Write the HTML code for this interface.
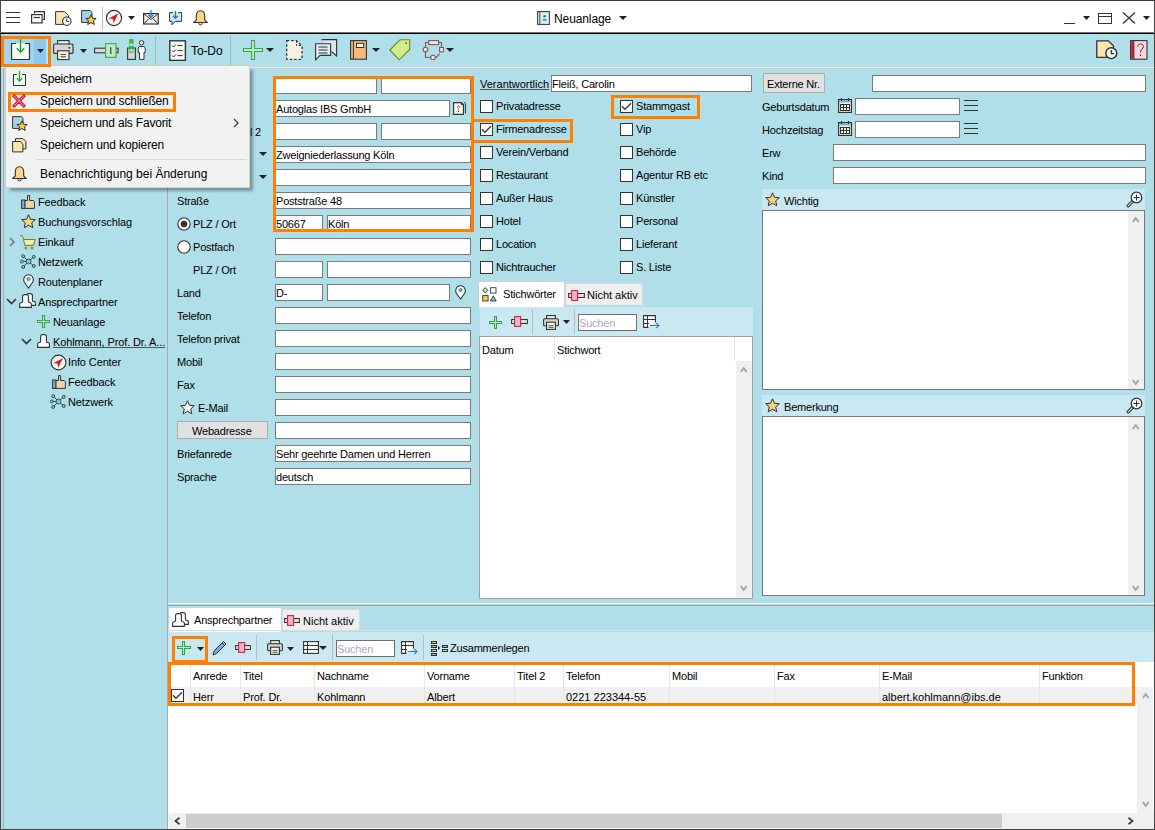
<!DOCTYPE html><html><head><meta charset="utf-8"><style>
html,body{margin:0;padding:0;width:1155px;height:830px;overflow:hidden;background:#b0dee9}
body>div,body>svg{position:absolute}
div{position:absolute}
u{text-decoration-color:#505050;text-underline-offset:1px}
.t{font-family:"Liberation Sans",sans-serif;line-height:13px;white-space:nowrap;color:#000}
</style></head><body>
<div style="left:0px;top:0px;width:1155px;height:830px;background:#b0dee9;"></div>
<div style="left:0px;top:0px;width:1155px;height:33px;background:#fff;"></div>
<div style="left:0px;top:0px;width:1155px;height:1px;background:#3a3a3a;"></div>
<div style="left:0px;top:0px;width:1px;height:830px;background:#464444;"></div>
<div style="left:1154px;top:0px;width:1px;height:830px;background:#464444;"></div>
<div style="left:0px;top:829px;width:1155px;height:1px;background:#464444;"></div>
<div style="left:0px;top:32px;width:1155px;height:1px;background:#707070;"></div>
<div style="left:0px;top:33px;width:1155px;height:1px;background:#000;"></div>
<div style="left:1px;top:67px;width:1153px;height:1px;background:#eeeaea;"></div>
<div style="left:1px;top:68px;width:1153px;height:1px;background:#c4cccf;"></div>
<div style="left:3px;top:68px;width:1px;height:761px;background:#a8a8b0;"></div>
<div style="left:167px;top:68px;width:1px;height:761px;background:#a8a8b0;"></div>
<div style="left:168px;top:603px;width:986px;height:1px;background:#fff;"></div>
<div style="left:168px;top:605px;width:986px;height:1px;background:#a0a0a0;"></div>
<div class="t" style="left:554px;top:13px;font-size:12px;letter-spacing:-0.1px;">Neuanlage</div>
<svg style="position:absolute;left:619px;top:16px" width="8" height="4" viewBox="0 0 8 4"><path d="M0 0 H8 L4.0 4 Z" fill="#222"/></svg>
<div style="left:1064px;top:23px;width:11px;height:1px;background:#333;"></div>
<svg style="position:absolute;left:1083px;top:16px" width="7" height="4" viewBox="0 0 7 4"><path d="M0 0 H7 L3.5 4 Z" fill="#222"/></svg>
<div style="left:1098px;top:13px;width:14px;height:11px;border:1px solid #333;box-sizing:border-box;"></div>
<div style="left:1099px;top:16px;width:12px;height:1px;background:#333;"></div>
<svg style="position:absolute;left:1122px;top:12px" width="14" height="12" viewBox="0 0 14 12"><path d="M1 0.5 L13 11.5 M13 0.5 L1 11.5" stroke="#333" stroke-width="1.3"/></svg>
<svg style="position:absolute;left:1143px;top:16px" width="7" height="4" viewBox="0 0 7 4"><path d="M0 0 H7 L3.5 4 Z" fill="#222"/></svg>
<div style="left:4px;top:39px;width:44px;height:25px;background:#a6d4ec;"></div>
<div style="left:34px;top:39px;width:12px;height:25px;background:#8cc8ee;"></div>
<div style="left:46px;top:39px;width:2px;height:25px;background:#b8e4f8;"></div>
<div class="t" style="left:191px;top:45px;font-size:12px;letter-spacing:-0.1px;">To-Do</div>
<div style="left:102px;top:7px;width:1px;height:23px;background:#bbb;"></div>
<div style="left:155px;top:36px;width:1px;height:30px;background:#a9b6ba;"></div>
<div style="left:230px;top:36px;width:1px;height:30px;background:#a9b6ba;"></div>
<div class="t" style="left:38px;top:196px;font-size:11px;letter-spacing:-0.12px;">Feedback</div>
<div class="t" style="left:38px;top:216px;font-size:11px;letter-spacing:-0.12px;">Buchungsvorschlag</div>
<div class="t" style="left:38px;top:236px;font-size:11px;letter-spacing:-0.12px;">Einkauf</div>
<div class="t" style="left:38px;top:256px;font-size:11px;letter-spacing:-0.12px;">Netzwerk</div>
<div class="t" style="left:38px;top:276px;font-size:11px;letter-spacing:-0.12px;">Routenplaner</div>
<div class="t" style="left:38px;top:296px;font-size:11px;letter-spacing:-0.12px;">Ansprechpartner</div>
<div class="t" style="left:53px;top:316px;font-size:11px;letter-spacing:-0.12px;">Neuanlage</div>
<div class="t" style="left:53px;top:336px;font-size:11px;letter-spacing:-0.12px;"><u>Kohlmann, Prof. Dr. A...</u></div>
<div class="t" style="left:68px;top:356px;font-size:11px;letter-spacing:-0.12px;">Info Center</div>
<div class="t" style="left:68px;top:376px;font-size:11px;letter-spacing:-0.12px;">Feedback</div>
<div class="t" style="left:68px;top:396px;font-size:11px;letter-spacing:-0.12px;">Netzwerk</div>
<div style="left:275px;top:77px;width:102px;height:17px;background:#fff;border:1px solid #7a7a7a;box-sizing:border-box;"></div>
<div style="left:381px;top:77px;width:90px;height:17px;background:#fff;border:1px solid #7a7a7a;box-sizing:border-box;"></div>
<div style="left:275px;top:100px;width:175px;height:17px;background:#fff;border:1px solid #7a7a7a;box-sizing:border-box;"></div>
<div class="t" style="left:276px;top:103px;font-size:11px;letter-spacing:-0.2px;">Autoglas IBS GmbH</div>
<div style="left:275px;top:123px;width:102px;height:17px;background:#fff;border:1px solid #7a7a7a;box-sizing:border-box;"></div>
<div style="left:381px;top:123px;width:90px;height:17px;background:#fff;border:1px solid #7a7a7a;box-sizing:border-box;"></div>
<div style="left:275px;top:146px;width:196px;height:17px;background:#fff;border:1px solid #7a7a7a;box-sizing:border-box;"></div>
<div class="t" style="left:276px;top:149px;font-size:11px;letter-spacing:-0.2px;">Zweigniederlassung Köln</div>
<div style="left:275px;top:169px;width:196px;height:17px;background:#fff;border:1px solid #7a7a7a;box-sizing:border-box;"></div>
<div style="left:275px;top:192px;width:196px;height:17px;background:#fff;border:1px solid #7a7a7a;box-sizing:border-box;"></div>
<div class="t" style="left:276px;top:195px;font-size:11px;letter-spacing:-0.2px;">Poststraße 48</div>
<div style="left:275px;top:215px;width:48px;height:17px;background:#fff;border:1px solid #7a7a7a;box-sizing:border-box;"></div>
<div class="t" style="left:276px;top:218px;font-size:11px;letter-spacing:-0.2px;">50667</div>
<div style="left:327px;top:215px;width:144px;height:17px;background:#fff;border:1px solid #7a7a7a;box-sizing:border-box;"></div>
<div class="t" style="left:328px;top:218px;font-size:11px;letter-spacing:-0.2px;">Köln</div>
<div style="left:275px;top:238px;width:196px;height:17px;background:#fff;border:1px solid #7a7a7a;box-sizing:border-box;"></div>
<div style="left:275px;top:261px;width:48px;height:17px;background:#fff;border:1px solid #7a7a7a;box-sizing:border-box;"></div>
<div style="left:327px;top:261px;width:144px;height:17px;background:#fff;border:1px solid #7a7a7a;box-sizing:border-box;"></div>
<div style="left:275px;top:284px;width:48px;height:17px;background:#fff;border:1px solid #7a7a7a;box-sizing:border-box;"></div>
<div class="t" style="left:276px;top:287px;font-size:11px;letter-spacing:-0.2px;">D-</div>
<div style="left:327px;top:284px;width:123px;height:17px;background:#fff;border:1px solid #7a7a7a;box-sizing:border-box;"></div>
<div style="left:275px;top:307px;width:196px;height:17px;background:#fff;border:1px solid #7a7a7a;box-sizing:border-box;"></div>
<div style="left:275px;top:330px;width:196px;height:17px;background:#fff;border:1px solid #7a7a7a;box-sizing:border-box;"></div>
<div style="left:275px;top:353px;width:196px;height:17px;background:#fff;border:1px solid #7a7a7a;box-sizing:border-box;"></div>
<div style="left:275px;top:376px;width:196px;height:17px;background:#fff;border:1px solid #7a7a7a;box-sizing:border-box;"></div>
<div style="left:275px;top:399px;width:196px;height:17px;background:#fff;border:1px solid #7a7a7a;box-sizing:border-box;"></div>
<div style="left:275px;top:422px;width:196px;height:17px;background:#fff;border:1px solid #7a7a7a;box-sizing:border-box;"></div>
<div style="left:275px;top:445px;width:196px;height:17px;background:#fff;border:1px solid #7a7a7a;box-sizing:border-box;"></div>
<div class="t" style="left:276px;top:448px;font-size:11px;letter-spacing:-0.2px;">Sehr geehrte Damen und Herren</div>
<div style="left:275px;top:468px;width:196px;height:17px;background:#fff;border:1px solid #7a7a7a;box-sizing:border-box;"></div>
<div class="t" style="left:276px;top:471px;font-size:11px;letter-spacing:-0.2px;">deutsch</div>
<div class="t" style="left:177px;top:195px;font-size:11px;letter-spacing:-0.2px;">Straße</div>
<div class="t" style="left:193px;top:218px;font-size:11px;letter-spacing:-0.2px;">PLZ / Ort</div>
<div class="t" style="left:193px;top:241px;font-size:11px;letter-spacing:-0.2px;">Postfach</div>
<div class="t" style="left:193px;top:264px;font-size:11px;letter-spacing:-0.2px;">PLZ / Ort</div>
<div class="t" style="left:177px;top:287px;font-size:11px;letter-spacing:-0.2px;">Land</div>
<div class="t" style="left:177px;top:310px;font-size:11px;letter-spacing:-0.2px;">Telefon</div>
<div class="t" style="left:177px;top:333px;font-size:11px;letter-spacing:-0.2px;">Telefon privat</div>
<div class="t" style="left:177px;top:356px;font-size:11px;letter-spacing:-0.2px;">Mobil</div>
<div class="t" style="left:177px;top:379px;font-size:11px;letter-spacing:-0.2px;">Fax</div>
<div class="t" style="left:198px;top:402px;font-size:11px;letter-spacing:-0.2px;">E-Mail</div>
<div class="t" style="left:177px;top:448px;font-size:11px;letter-spacing:-0.2px;">Briefanrede</div>
<div class="t" style="left:177px;top:471px;font-size:11px;letter-spacing:-0.2px;">Sprache</div>
<div class="t" style="left:250px;top:126px;font-size:11px;letter-spacing:-0.2px;">l 2</div>
<svg style="position:absolute;left:259px;top:152px" width="8" height="4" viewBox="0 0 8 4"><path d="M0 0 H8 L4.0 4 Z" fill="#222"/></svg>
<svg style="position:absolute;left:259px;top:175px" width="8" height="4" viewBox="0 0 8 4"><path d="M0 0 H8 L4.0 4 Z" fill="#222"/></svg>
<svg style="position:absolute;left:177px;top:217px" width="14" height="14" viewBox="0 0 14 14"><circle cx="7" cy="7" r="6.2" fill="#fff" stroke="#333" stroke-width="1.1"/><circle cx="7" cy="7" r="3.3" fill="#333"/></svg>
<svg style="position:absolute;left:177px;top:240px" width="14" height="14" viewBox="0 0 14 14"><circle cx="7" cy="7" r="6.2" fill="#fff" stroke="#333" stroke-width="1.1"/></svg>
<div style="left:177px;top:421px;width:91px;height:18px;background:#e1e1e1;border:1px solid #adadad;box-sizing:border-box;"></div>
<div class="t" style="left:192px;top:425px;font-size:11px;letter-spacing:-0.2px;">Webadresse</div>
<div style="left:273px;top:76px;width:201px;height:156px;border:3px solid #ff7f00;box-sizing:border-box;"></div>
<div class="t" style="left:480px;top:78px;font-size:11px;letter-spacing:0px;"><u>Verantwortlich</u></div>
<div style="left:551px;top:75px;width:201px;height:17px;background:#fff;border:1px solid #7a7a7a;box-sizing:border-box;"></div>
<div class="t" style="left:552px;top:78px;font-size:11px;letter-spacing:-0.2px;">Fleiß, Carolin</div>
<div style="left:480px;top:100px;width:13px;height:13px;background:#fff;border:1px solid #333;box-sizing:border-box;"></div>
<div class="t" style="left:496px;top:100px;font-size:11px;letter-spacing:-0.2px;">Privatadresse</div>
<div style="left:620px;top:100px;width:13px;height:13px;background:#fff;border:1px solid #333;box-sizing:border-box;"></div>
<svg style="position:absolute;left:620px;top:100px" width="13" height="13" viewBox="0 0 13 13"><path d="M2 6.3 L5 9.3 L11 3.2" fill="none" stroke="#3a3a3a" stroke-width="1.4"/></svg>
<div class="t" style="left:636px;top:100px;font-size:11px;letter-spacing:-0.2px;">Stammgast</div>
<div style="left:480px;top:123px;width:13px;height:13px;background:#fff;border:1px solid #333;box-sizing:border-box;"></div>
<svg style="position:absolute;left:480px;top:123px" width="13" height="13" viewBox="0 0 13 13"><path d="M2 6.3 L5 9.3 L11 3.2" fill="none" stroke="#3a3a3a" stroke-width="1.4"/></svg>
<div class="t" style="left:496px;top:123px;font-size:11px;letter-spacing:-0.2px;">Firmenadresse</div>
<div style="left:620px;top:123px;width:13px;height:13px;background:#fff;border:1px solid #333;box-sizing:border-box;"></div>
<div class="t" style="left:636px;top:123px;font-size:11px;letter-spacing:-0.2px;">Vip</div>
<div style="left:480px;top:146px;width:13px;height:13px;background:#fff;border:1px solid #333;box-sizing:border-box;"></div>
<div class="t" style="left:496px;top:146px;font-size:11px;letter-spacing:-0.2px;">Verein/Verband</div>
<div style="left:620px;top:146px;width:13px;height:13px;background:#fff;border:1px solid #333;box-sizing:border-box;"></div>
<div class="t" style="left:636px;top:146px;font-size:11px;letter-spacing:-0.2px;">Behörde</div>
<div style="left:480px;top:169px;width:13px;height:13px;background:#fff;border:1px solid #333;box-sizing:border-box;"></div>
<div class="t" style="left:496px;top:169px;font-size:11px;letter-spacing:-0.2px;">Restaurant</div>
<div style="left:620px;top:169px;width:13px;height:13px;background:#fff;border:1px solid #333;box-sizing:border-box;"></div>
<div class="t" style="left:636px;top:169px;font-size:11px;letter-spacing:-0.2px;">Agentur RB etc</div>
<div style="left:480px;top:192px;width:13px;height:13px;background:#fff;border:1px solid #333;box-sizing:border-box;"></div>
<div class="t" style="left:496px;top:192px;font-size:11px;letter-spacing:-0.2px;">Außer Haus</div>
<div style="left:620px;top:192px;width:13px;height:13px;background:#fff;border:1px solid #333;box-sizing:border-box;"></div>
<div class="t" style="left:636px;top:192px;font-size:11px;letter-spacing:-0.2px;">Künstler</div>
<div style="left:480px;top:215px;width:13px;height:13px;background:#fff;border:1px solid #333;box-sizing:border-box;"></div>
<div class="t" style="left:496px;top:215px;font-size:11px;letter-spacing:-0.2px;">Hotel</div>
<div style="left:620px;top:215px;width:13px;height:13px;background:#fff;border:1px solid #333;box-sizing:border-box;"></div>
<div class="t" style="left:636px;top:215px;font-size:11px;letter-spacing:-0.2px;">Personal</div>
<div style="left:480px;top:238px;width:13px;height:13px;background:#fff;border:1px solid #333;box-sizing:border-box;"></div>
<div class="t" style="left:496px;top:238px;font-size:11px;letter-spacing:-0.2px;">Location</div>
<div style="left:620px;top:238px;width:13px;height:13px;background:#fff;border:1px solid #333;box-sizing:border-box;"></div>
<div class="t" style="left:636px;top:238px;font-size:11px;letter-spacing:-0.2px;">Lieferant</div>
<div style="left:480px;top:261px;width:13px;height:13px;background:#fff;border:1px solid #333;box-sizing:border-box;"></div>
<div class="t" style="left:496px;top:261px;font-size:11px;letter-spacing:-0.2px;">Nichtraucher</div>
<div style="left:620px;top:261px;width:13px;height:13px;background:#fff;border:1px solid #333;box-sizing:border-box;"></div>
<div class="t" style="left:636px;top:261px;font-size:11px;letter-spacing:-0.2px;">S. Liste</div>
<div style="left:611px;top:95px;width:89px;height:24px;border:3px solid #ff7f00;box-sizing:border-box;"></div>
<div style="left:471px;top:119px;width:102px;height:24px;border:3px solid #ff7f00;box-sizing:border-box;"></div>
<div style="left:478px;top:281px;width:87px;height:26px;background:#fff;border:1px solid #d0d0d0;border-bottom:0;box-sizing:border-box;"></div>
<div style="left:565px;top:283px;width:78px;height:22px;background:#efefef;border:1px solid #dadada;border-bottom:0;box-sizing:border-box;"></div>
<div class="t" style="left:503px;top:288px;font-size:11px;letter-spacing:-0.2px;">Stichwörter</div>
<div class="t" style="left:587px;top:289px;font-size:11px;letter-spacing:0px;">Nicht aktiv</div>
<div style="left:480px;top:307px;width:273px;height:29px;background:#c9e8f1;"></div>
<div style="left:479px;top:336px;width:274px;height:263px;background:#fff;border:1px solid #a0a0a0;box-sizing:border-box;"></div>
<div style="left:736px;top:361px;width:16px;height:237px;background:#f0f0f0;"></div>
<div class="t" style="left:482px;top:344px;font-size:11px;letter-spacing:-0.2px;">Datum</div>
<div class="t" style="left:557px;top:344px;font-size:11px;letter-spacing:-0.2px;">Stichwort</div>
<div style="left:554px;top:337px;width:1px;height:24px;background:#e5e5e5;"></div>
<div style="left:734px;top:337px;width:1px;height:24px;background:#e5e5e5;"></div>
<div style="left:578px;top:314px;width:59px;height:17px;background:#fff;border:1px solid #7a7a7a;box-sizing:border-box;border-color:#6e6e6e;"></div>
<div class="t" style="left:579px;top:317px;font-size:11px;letter-spacing:-0.2px;"><span style="color:#a8a8c8">Suchen</span></div>
<div style="left:532px;top:309px;width:1px;height:25px;background:#b4bec2;"></div>
<div style="left:574px;top:309px;width:1px;height:25px;background:#b4bec2;"></div>
<div style="left:763px;top:73px;width:62px;height:20px;background:#e1e1e1;border:1px solid #adadad;box-sizing:border-box;"></div>
<div class="t" style="left:767px;top:78px;font-size:11px;letter-spacing:-0.2px;">Externe Nr.</div>
<div style="left:872px;top:75px;width:274px;height:17px;background:#fff;border:1px solid #7a7a7a;box-sizing:border-box;"></div>
<div class="t" style="left:762px;top:101px;font-size:11px;letter-spacing:-0.2px;">Geburtsdatum</div>
<div style="left:855px;top:98px;width:105px;height:17px;background:#fff;border:1px solid #7a7a7a;box-sizing:border-box;"></div>
<div class="t" style="left:762px;top:124px;font-size:11px;letter-spacing:-0.2px;">Hochzeitstag</div>
<div style="left:855px;top:121px;width:105px;height:17px;background:#fff;border:1px solid #7a7a7a;box-sizing:border-box;"></div>
<div class="t" style="left:762px;top:147px;font-size:11px;letter-spacing:-0.2px;">Erw</div>
<div style="left:833px;top:144px;width:313px;height:17px;background:#fff;border:1px solid #7a7a7a;box-sizing:border-box;"></div>
<div class="t" style="left:762px;top:170px;font-size:11px;letter-spacing:-0.2px;">Kind</div>
<div style="left:833px;top:167px;width:313px;height:17px;background:#fff;border:1px solid #7a7a7a;box-sizing:border-box;"></div>
<div style="left:762px;top:189px;width:383px;height:21px;background:#c9e8f1;"></div>
<div class="t" style="left:784px;top:195px;font-size:11px;letter-spacing:-0.2px;">Wichtig</div>
<div style="left:762px;top:210px;width:383px;height:180px;background:#fff;border:1px solid #7a7a7a;box-sizing:border-box;"></div>
<div style="left:1128px;top:211px;width:16px;height:178px;background:#f0f0f0;"></div>
<div style="left:762px;top:395px;width:383px;height:21px;background:#c9e8f1;"></div>
<div class="t" style="left:784px;top:401px;font-size:11px;letter-spacing:-0.2px;">Bemerkung</div>
<div style="left:762px;top:416px;width:383px;height:180px;background:#fff;border:1px solid #7a7a7a;box-sizing:border-box;"></div>
<div style="left:1128px;top:417px;width:16px;height:178px;background:#f0f0f0;"></div>
<div style="left:169px;top:608px;width:112px;height:24px;background:#fff;"></div>
<div style="left:282px;top:609px;width:78px;height:22px;background:#efefef;border:1px solid #dadada;border-bottom:0;box-sizing:border-box;"></div>
<div class="t" style="left:194px;top:614px;font-size:11px;letter-spacing:-0.2px;">Ansprechpartner</div>
<div class="t" style="left:303px;top:615px;font-size:11px;letter-spacing:0px;">Nicht aktiv</div>
<div style="left:168px;top:630px;width:986px;height:1px;background:#d6dde0;"></div>
<div style="left:168px;top:632px;width:986px;height:30px;background:#c9e8f1;"></div>
<div style="left:168px;top:662px;width:986px;height:167px;background:#fff;"></div>
<div style="left:336px;top:640px;width:59px;height:17px;background:#fff;border:1px solid #7a7a7a;box-sizing:border-box;border-color:#6e6e6e;"></div>
<div class="t" style="left:337px;top:643px;font-size:11px;letter-spacing:-0.2px;"><span style="color:#a8a8c8">Suchen</span></div>
<div class="t" style="left:450px;top:642px;font-size:11px;letter-spacing:-0.2px;">Zusammenlegen</div>
<div style="left:256px;top:635px;width:1px;height:25px;background:#b4bec2;"></div>
<div style="left:332px;top:635px;width:1px;height:25px;background:#b4bec2;"></div>
<div style="left:423px;top:635px;width:1px;height:25px;background:#b4bec2;"></div>
<div style="left:172px;top:636px;width:36px;height:27px;border:3px solid #ff7f00;box-sizing:border-box;"></div>
<div class="t" style="left:193px;top:670px;font-size:11px;letter-spacing:-0.2px;">Anrede</div>
<div class="t" style="left:243px;top:670px;font-size:11px;letter-spacing:-0.2px;">Titel</div>
<div class="t" style="left:317px;top:670px;font-size:11px;letter-spacing:-0.2px;">Nachname</div>
<div class="t" style="left:427px;top:670px;font-size:11px;letter-spacing:-0.2px;">Vorname</div>
<div class="t" style="left:517px;top:670px;font-size:11px;letter-spacing:-0.2px;">Titel 2</div>
<div class="t" style="left:566px;top:670px;font-size:11px;letter-spacing:-0.2px;">Telefon</div>
<div class="t" style="left:672px;top:670px;font-size:11px;letter-spacing:-0.2px;">Mobil</div>
<div class="t" style="left:777px;top:670px;font-size:11px;letter-spacing:-0.2px;">Fax</div>
<div class="t" style="left:882px;top:670px;font-size:11px;letter-spacing:-0.2px;">E-Mail</div>
<div class="t" style="left:1042px;top:670px;font-size:11px;letter-spacing:-0.2px;">Funktion</div>
<div style="left:169px;top:687px;width:968px;height:17px;background:#f0f0f0;"></div>
<div style="left:190px;top:664px;width:1px;height:40px;background:#e5e5e5;"></div>
<div style="left:240px;top:664px;width:1px;height:40px;background:#e5e5e5;"></div>
<div style="left:314px;top:664px;width:1px;height:40px;background:#e5e5e5;"></div>
<div style="left:424px;top:664px;width:1px;height:40px;background:#e5e5e5;"></div>
<div style="left:514px;top:664px;width:1px;height:40px;background:#e5e5e5;"></div>
<div style="left:563px;top:664px;width:1px;height:40px;background:#e5e5e5;"></div>
<div style="left:669px;top:664px;width:1px;height:40px;background:#e5e5e5;"></div>
<div style="left:774px;top:664px;width:1px;height:40px;background:#e5e5e5;"></div>
<div style="left:879px;top:664px;width:1px;height:40px;background:#e5e5e5;"></div>
<div style="left:1039px;top:664px;width:1px;height:40px;background:#e5e5e5;"></div>
<div class="t" style="left:193px;top:691px;font-size:11px;letter-spacing:-0.15px;">Herr</div>
<div class="t" style="left:243px;top:691px;font-size:11px;letter-spacing:-0.15px;">Prof. Dr.</div>
<div class="t" style="left:317px;top:691px;font-size:11px;letter-spacing:-0.15px;">Kohlmann</div>
<div class="t" style="left:427px;top:691px;font-size:11px;letter-spacing:-0.15px;">Albert</div>
<div class="t" style="left:566px;top:691px;font-size:11px;letter-spacing:0px;">0221 223344-55</div>
<div class="t" style="left:882px;top:691px;font-size:11px;letter-spacing:0px;">albert.kohlmann@ibs.de</div>
<div style="left:171px;top:689px;width:13px;height:13px;background:#fff;border:1px solid #333;box-sizing:border-box;"></div>
<svg style="position:absolute;left:171px;top:689px" width="13" height="13" viewBox="0 0 13 13"><path d="M2 6.3 L5 9.3 L11 3.2" fill="none" stroke="#3a3a3a" stroke-width="1.4"/></svg>
<div style="left:168px;top:662px;width:967px;height:44px;border:3px solid #ff7f00;box-sizing:border-box;"></div>
<div style="left:1137px;top:687px;width:16px;height:126px;background:#f0f0f0;"></div>
<div style="left:169px;top:813px;width:985px;height:16px;background:#f0f0f0;"></div>
<div style="left:186px;top:814px;width:816px;height:14px;background:#cdcdcd;"></div>
<svg style="position:absolute;left:6px;top:11px" width="15" height="12" viewBox="0 0 15 12"><path d="M0 1.5H14M0 6.5H14M0 11.5H14" stroke="#2d3436" stroke-width="1.2"/></svg>
<svg style="position:absolute;left:31px;top:11px" width="15" height="13" viewBox="0 0 15 13"><path d="M3.5 2.5V0.6H13.4V8.5H11.5" fill="none" stroke="#2d3436" stroke-width="1.2"/><rect x="0.6" y="3.6" width="10.5" height="8.3" fill="#fff" stroke="#2d3436" stroke-width="1.2"/><path d="M2.5 6.5H9" stroke="#2d3436" stroke-width="1.2"/></svg>
<svg style="position:absolute;left:55px;top:11px" width="17" height="15" viewBox="0 0 17 15"><g transform="scale(1.0)"><path d="M0.6 0.6H9.5L13.5 4.5V13.4H0.6Z" fill="#fde3b0" stroke="#2d3436" stroke-width="1"/><circle cx="11.8" cy="10.2" r="4.2" fill="#f4f7f4" stroke="#2d3436" stroke-width="1.1"/><path d="M11.8 7.8V10.5H14" fill="none" stroke="#2d3436" stroke-width="1"/></g></svg>
<svg style="position:absolute;left:81px;top:10px" width="17" height="16" viewBox="0 0 17 16"><path d="M0.6 0.6H9.2L11 2.4V12.4H0.6Z" fill="#a6d2e2" stroke="#2d3436" stroke-width="1"/><path d="M10 4.8L11.5 8.2L15.2 8.5L12.4 10.8L13.3 14.5L10 12.6L6.7 14.5L7.6 10.8L4.8 8.5L8.5 8.2Z" fill="#fcc844" stroke="#2d3436" stroke-width="1"/></svg>
<svg style="position:absolute;left:105px;top:9px" width="18" height="18" viewBox="0 0 18 18"><circle cx="9" cy="9" r="7.6" fill="#f2f5f2" stroke="#2d3436" stroke-width="1.2"/><path d="M13.2 4.6L3.6 9.6L8 10L8.6 14.2Z" fill="#e8102a"/></svg>
<svg style="position:absolute;left:128px;top:16px" width="7" height="4" viewBox="0 0 7 4"><path d="M0 0 H7 L3.5 4 Z" fill="#222"/></svg>
<svg style="position:absolute;left:143px;top:10px" width="16" height="15" viewBox="0 0 16 15"><rect x="0.6" y="3.6" width="14.6" height="10.4" fill="#f8f5e6" stroke="#2d3436" stroke-width="1.2"/><path d="M0.8 3.8L8 9.5L15 3.8M0.8 13.8L6 8.5M15 13.8L10 8.5" fill="none" stroke="#2d3436" stroke-width="1"/><path d="M7.9 0V7" stroke="#1a78d0" stroke-width="1.3"/><path d="M5.5 4.8L7.9 7.4L10.3 4.8" fill="none" stroke="#1a78d0" stroke-width="1.3"/></svg>
<svg style="position:absolute;left:169px;top:11px" width="14" height="15" viewBox="0 0 14 15"><path d="M4 1.6H0.6V10.4H3V13.8L6.3 10.4H12.6V1.6H9" fill="#d4e9f2" stroke="#2d3436" stroke-width="1"/><path d="M6.5 0V7" stroke="#1a78d0" stroke-width="1.3"/><path d="M4 4.8L6.5 7.4L9 4.8" fill="none" stroke="#1a78d0" stroke-width="1.3"/></svg>
<svg style="position:absolute;left:193px;top:10px" width="15" height="16" viewBox="0 0 15 16"><path d="M7.5 0.8C4.5 0.8 3.3 3 3.3 6V10L0.8 12.5H14.2L11.7 10V6C11.7 3 10.5 0.8 7.5 0.8Z" fill="#fdd68a" stroke="#2d3436" stroke-width="1.1"/><path d="M5.8 13.2A1.7 1.7 0 0 0 9.2 13.2" fill="#fdd68a" stroke="#2d3436" stroke-width="1"/></svg>
<svg style="position:absolute;left:537px;top:11px" width="13" height="14" viewBox="0 0 13 14"><rect x="0.6" y="0.6" width="11.8" height="12.8" fill="#d8eef2" stroke="#2d3436" stroke-width="1"/><path d="M2.8 0.6V13.4" stroke="#2d3436" stroke-width="0.9"/><circle cx="7.6" cy="5.2" r="1.3" fill="#3a7a8a"/><path d="M5.3 9.5C5.3 7.6 9.9 7.6 9.9 9.5Z" fill="#3a7a8a"/></svg>
<svg style="position:absolute;left:11px;top:39px" width="21" height="22" viewBox="0 0 21 22"><path d="M5 4.5H0.5V20.5H18.5V4.5H14" fill="#f3f9f3" stroke="#2d3436" stroke-width="1.2"/><path d="M9.5 0V13" stroke="#12a826" stroke-width="1.3"/><path d="M5.8 9.3L9.5 13.2L13.2 9.3" fill="none" stroke="#12a826" stroke-width="1.3"/></svg>
<svg style="position:absolute;left:37px;top:49px" width="7" height="4" viewBox="0 0 7 4"><path d="M0 0 H7 L3.5 4 Z" fill="#222"/></svg>
<svg style="position:absolute;left:53px;top:40px" width="21" height="21" viewBox="0 0 21 21"><rect x="4.6" y="0.6" width="11.4" height="3.8" fill="#f6f1dc" stroke="#2d3436" stroke-width="1.1"/><rect x="0.6" y="4" width="19.4" height="9.4" rx="1" fill="#d3d7d3" stroke="#2d3436" stroke-width="1.1"/><rect x="4.6" y="10.8" width="11.4" height="8.8" fill="#f6f1dc" stroke="#2d3436" stroke-width="1.1"/><path d="M7.5 14.5H13M7.5 16.8H13" stroke="#2d3436" stroke-width="0.9"/><rect x="15.5" y="7" width="1.6" height="1.6" fill="#2d3436"/></svg>
<svg style="position:absolute;left:80px;top:49px" width="7" height="4" viewBox="0 0 7 4"><path d="M0 0 H7 L3.5 4 Z" fill="#222"/></svg>
<svg style="position:absolute;left:94px;top:43px" width="25" height="15" viewBox="0 0 25 15"><rect x="0.6" y="5.2" width="23.4" height="4.6" fill="#dcdcd6" stroke="#2d3436" stroke-width="1.1"/><rect x="11.6" y="0.6" width="10.4" height="13.8" fill="#c6e6c6" stroke="#3cb44a" stroke-width="1.2"/><path d="M16.8 4.2V11" stroke="#2d3436" stroke-width="1.1"/></svg>
<svg style="position:absolute;left:127px;top:39px" width="20" height="21" viewBox="0 0 20 21"><rect x="0.6" y="9" width="7.8" height="11.4" fill="#d6d8d4" stroke="#2d3436" stroke-width="1.1"/><rect x="2.3" y="0" width="4.2" height="13.8" fill="#3cb44a"/><rect x="3.3" y="4.6" width="2.2" height="2.2" fill="#fff"/><rect x="3.3" y="10.4" width="2.2" height="2.2" fill="#fff"/><circle cx="14.6" cy="3.8" r="2.2" fill="#fff" stroke="#2d3436" stroke-width="1"/><path d="M12 7.6H17.4L18.2 9V13.5H17V20.4H12.5V13.5H11.2V9Z" fill="#fff" stroke="#2d3436" stroke-width="1"/></svg>
<svg style="position:absolute;left:169px;top:40px" width="18" height="21" viewBox="0 0 18 21"><rect x="0.8" y="0.8" width="15.6" height="19.6" fill="#f7faf4" stroke="#2d3436" stroke-width="1.4"/><path d="M3.2 5.5L4.6 7L7 4.5M3.2 10.5L4.6 12L7 9.5M3.2 15.5L4.6 17L7 14.5" fill="none" stroke="#2d3436" stroke-width="1"/><path d="M8.5 5.6H13.5M8.5 10.6H13.5M8.5 15.6H13.5" stroke="#2d3436" stroke-width="1"/></svg>
<svg style="position:absolute;left:243px;top:40px" width="20" height="20" viewBox="0 0 20 20"><path d="M8.5 0.5H11.5V8.5H19.5V11.5H11.5V19.5H8.5V11.5H0.5V8.5H8.5Z" fill="#c4e8cc" stroke="#2fa845" stroke-width="1.1"/></svg>
<svg style="position:absolute;left:266px;top:48px" width="8" height="4" viewBox="0 0 8 4"><path d="M0 0 H8 L4.0 4 Z" fill="#222"/></svg>
<svg style="position:absolute;left:286px;top:40px" width="17" height="20" viewBox="0 0 17 20"><path d="M0.7 0.7H10.5L16 6V19.3H0.7Z" fill="#f6f2e3"/><path d="M0.7 0.7H10.5L16 6V19.3H0.7Z" fill="none" stroke="#2d3436" stroke-width="1.3" stroke-dasharray="2.5 2"/><path d="M10.5 0.7V5.5H16" fill="none" stroke="#2d3436" stroke-width="1" stroke-dasharray="2 1.5"/></svg>
<svg style="position:absolute;left:315px;top:39px" width="23" height="22" viewBox="0 0 23 22"><path d="M6.6 0.6H21.6V17L17 13V12.5" fill="#dae7ec" stroke="#2d3436" stroke-width="1.1"/><path d="M0.6 4.8H15.6V16.4H5L0.6 20.8Z" fill="#e2eef2" stroke="#2d3436" stroke-width="1.1"/><path d="M3.5 8H12.5M3.5 11H12.5M3.5 14H12.5" stroke="#2d3436" stroke-width="1"/></svg>
<svg style="position:absolute;left:350px;top:40px" width="17" height="20" viewBox="0 0 17 20"><rect x="0.6" y="0.6" width="15.8" height="18.6" fill="#f8b878" stroke="#2d3436" stroke-width="1.1"/><path d="M3.4 0.6V19" stroke="#2d3436" stroke-width="1"/><rect x="6.5" y="3.3" width="7.2" height="4.2" fill="#fcf3df" stroke="#2d3436" stroke-width="1"/></svg>
<svg style="position:absolute;left:372px;top:48px" width="8" height="4" viewBox="0 0 8 4"><path d="M0 0 H8 L4.0 4 Z" fill="#222"/></svg>
<svg style="position:absolute;left:389px;top:39px" width="22" height="22" viewBox="0 0 22 22"><path d="M0.8 11L11 0.7H20.7V10.5L10.2 20.8Z" fill="#d2ea8a" stroke="#6b8b1e" stroke-width="1.1"/><rect x="16.4" y="3.4" width="1.6" height="1.6" fill="#4a6a10"/></svg>
<svg style="position:absolute;left:422px;top:40px" width="22" height="20" viewBox="0 0 22 20"><path d="M7 2.5H3.5V17.5H8.5M13 17.5H14L17.8 13.7M19.5 7.5V2.5H16.5" fill="none" stroke="#7a5c5c" stroke-width="1.1"/><rect x="6.8" y="0.6" width="9.8" height="4" fill="#fde2e6" stroke="#7a5c5c" stroke-width="1.1"/><circle cx="3.5" cy="9.6" r="2.3" fill="#fde2e6" stroke="#7a5c5c" stroke-width="1.1"/><circle cx="11" cy="17.5" r="2.3" fill="#fde2e6" stroke="#7a5c5c" stroke-width="1.1"/><rect x="17.6" y="7.5" width="4" height="4.3" fill="#fde2e6" stroke="#7a5c5c" stroke-width="1.1"/></svg>
<svg style="position:absolute;left:446px;top:48px" width="8" height="4" viewBox="0 0 8 4"><path d="M0 0 H8 L4.0 4 Z" fill="#222"/></svg>
<svg style="position:absolute;left:1096px;top:40px" width="22" height="20" viewBox="0 0 22 20"><g transform="scale(1.2941176470588236)"><path d="M0.6 0.6H9.5L13.5 4.5V13.4H0.6Z" fill="#fde3b0" stroke="#2d3436" stroke-width="1"/><circle cx="11.8" cy="10.2" r="4.2" fill="#f4f7f4" stroke="#2d3436" stroke-width="1.1"/><path d="M11.8 7.8V10.5H14" fill="none" stroke="#2d3436" stroke-width="1"/></g></svg>
<svg style="position:absolute;left:1130px;top:40px" width="18" height="20" viewBox="0 0 18 20"><rect x="0.6" y="0.6" width="16.4" height="18.6" fill="#fcd6de" stroke="#2d3436" stroke-width="1.1"/><rect x="1.2" y="1.2" width="2.6" height="17.4" fill="#d8102a"/><path d="M3.9 0.6V19" stroke="#2d3436" stroke-width="0.9"/><path d="M7.6 6.5C7.6 3.2 13.4 3.2 13.4 6.5C13.4 8.8 10.5 9.2 10.5 12.5M10.5 14.5V16" fill="none" stroke="#2d3436" stroke-width="1"/></svg>
<svg style="position:absolute;left:21px;top:195px" width="14" height="14" viewBox="0 0 14 14"><rect x="0.6" y="5" width="3.5" height="8.4" fill="#78aee8" stroke="#2d3436" stroke-width="1"/><path d="M4 5.5H6.5V0.6H8.6V5.5H12.4L13.4 6.5V13.4H4Z" fill="#f0d2a8" stroke="#2d3436" stroke-width="1"/></svg>
<svg style="position:absolute;left:21px;top:214px" width="15" height="15" viewBox="0 0 15 15"><g transform="scale(1.0)"><path d="M7.5 0.8L9.5 5.3L14.3 5.7L10.7 8.9L11.8 13.8L7.5 11.2L3.2 13.8L4.3 8.9L0.7 5.7L5.5 5.3Z" fill="#fcd27a" stroke="#2d3436" stroke-width="1"/></g></svg>
<svg style="position:absolute;left:9px;top:237px" width="6" height="10" viewBox="0 0 6 10"><path d="M1 1L5 5L1 9" fill="none" stroke="#666" stroke-width="1.3"/></svg>
<svg style="position:absolute;left:20px;top:235px" width="16" height="15" viewBox="0 0 16 15"><path d="M0 0.6H2.2L3.5 4.5H15.2L13.4 10.4H4.8L3.5 4.5" fill="#e8f0a8" stroke="#7a7a20" stroke-width="1"/><circle cx="6" cy="13" r="1.1" fill="none" stroke="#7a7a20" stroke-width="0.9"/><circle cx="12" cy="13" r="1.1" fill="none" stroke="#7a7a20" stroke-width="0.9"/></svg>
<svg style="position:absolute;left:20px;top:254px" width="16" height="15" viewBox="0 0 16 15"><g transform="translate(1 1)"><path d="M7.5 6.5L2.2 1.2" stroke="#2d3436" stroke-width="0.9"/><path d="M7.5 6.5L12.8 1.8" stroke="#2d3436" stroke-width="0.9"/><path d="M7.5 6.5L0.8 6.5" stroke="#2d3436" stroke-width="0.9"/><path d="M7.5 6.5L2.2 12" stroke="#2d3436" stroke-width="0.9"/><path d="M7.5 6.5L12.8 11" stroke="#2d3436" stroke-width="0.9"/><circle cx="2.2" cy="1.2" r="1.5" fill="#78c6e0" stroke="#2d3436" stroke-width="0.8"/><circle cx="12.8" cy="1.8" r="1.5" fill="#78c6e0" stroke="#2d3436" stroke-width="0.8"/><circle cx="0.8" cy="6.5" r="1.5" fill="#78c6e0" stroke="#2d3436" stroke-width="0.8"/><circle cx="2.2" cy="12" r="1.5" fill="#78c6e0" stroke="#2d3436" stroke-width="0.8"/><circle cx="12.8" cy="11" r="1.5" fill="#78c6e0" stroke="#2d3436" stroke-width="0.8"/><circle cx="7.5" cy="6.5" r="2.5" fill="#78c6e0" stroke="#2d3436" stroke-width="0.8"/></g></svg>
<svg style="position:absolute;left:23px;top:274px" width="11" height="15" viewBox="0 0 11 15"><path d="M5.5 14L1.5 8.5C0 6.5 0.6 0.7 5.5 0.7C10.4 0.7 11 6.5 9.5 8.5Z" fill="#fff" stroke="#2d3436" stroke-width="1.1"/><circle cx="5.5" cy="5" r="1.6" fill="#78c6e0" stroke="#2d3436" stroke-width="0.6"/></svg>
<svg style="position:absolute;left:6px;top:298px" width="11" height="7" viewBox="0 0 11 7"><path d="M1 1L5.5 5.5L10 1" fill="none" stroke="#333" stroke-width="1.6"/></svg>
<svg style="position:absolute;left:19px;top:293px" width="18" height="15" viewBox="0 0 18 15"><path d="M8 1.3C8.3 0.8 8.9 0.6 9.6 0.6H11.4C12.5 0.6 13.4 1.3 13.4 2.6V7C13.4 7.8 14 8.4 14.8 8.4C15.8 8.4 16.4 9 16.4 10V12.4H13" fill="#fff" stroke="#2d3436" stroke-width="1.1"/><path d="M3.6 8.6V3.6C3.6 2.3 4.5 1.6 5.6 1.6H7.4C8.5 1.6 9.4 2.3 9.4 3.6V8.6C9.4 9.2 10 9.8 10.8 9.8C11.8 9.8 12.4 10.4 12.4 11.4V14.4H0.6V11.4C0.6 10.4 1.2 9.8 2.2 9.8C3 9.8 3.6 9.2 3.6 8.6Z" fill="#fff" stroke="#2d3436" stroke-width="1.1"/></svg>
<svg style="position:absolute;left:37px;top:315px" width="13" height="13" viewBox="0 0 13 13"><path d="M5.5 0.5H7.5V5.5H12.5V7.5H7.5V12.5H5.5V7.5H0.5V5.5H5.5Z" fill="#c4e8cc" stroke="#2fa845" stroke-width="1.1"/></svg>
<svg style="position:absolute;left:21px;top:338px" width="11" height="7" viewBox="0 0 11 7"><path d="M1 1L5.5 5.5L10 1" fill="none" stroke="#333" stroke-width="1.6"/></svg>
<svg style="position:absolute;left:37px;top:334px" width="13" height="14" viewBox="0 0 13 14"><path d="M3.6 7.2V2.6C3.6 1.3 4.5 0.6 5.6 0.6H7.4C8.5 0.6 9.4 1.3 9.4 2.6V7.2C9.4 7.9 10 8.5 10.8 8.5C11.8 8.5 12.4 9.1 12.4 10.1V13.4H0.6V10.1C0.6 9.1 1.2 8.5 2.2 8.5C3 8.5 3.6 7.9 3.6 7.2Z" fill="#fff" stroke="#2d3436" stroke-width="1.1"/></svg>
<svg style="position:absolute;left:50px;top:354px" width="17" height="17" viewBox="0 0 17 17"><circle cx="8.5" cy="8.5" r="7.4" fill="#f2f5f2" stroke="#2d3436" stroke-width="1.1"/><path d="M12.8 4.2L3.4 9.2L7.6 9.6L8.2 13.8Z" fill="#e8102a"/></svg>
<svg style="position:absolute;left:52px;top:375px" width="14" height="14" viewBox="0 0 14 14"><rect x="0.6" y="5" width="3.5" height="8.4" fill="#78aee8" stroke="#2d3436" stroke-width="1"/><path d="M4 5.5H6.5V0.6H8.6V5.5H12.4L13.4 6.5V13.4H4Z" fill="#f0d2a8" stroke="#2d3436" stroke-width="1"/></svg>
<svg style="position:absolute;left:50px;top:394px" width="16" height="15" viewBox="0 0 16 15"><g transform="translate(1 1)"><path d="M7.5 6.5L2.2 1.2" stroke="#2d3436" stroke-width="0.9"/><path d="M7.5 6.5L12.8 1.8" stroke="#2d3436" stroke-width="0.9"/><path d="M7.5 6.5L0.8 6.5" stroke="#2d3436" stroke-width="0.9"/><path d="M7.5 6.5L2.2 12" stroke="#2d3436" stroke-width="0.9"/><path d="M7.5 6.5L12.8 11" stroke="#2d3436" stroke-width="0.9"/><circle cx="2.2" cy="1.2" r="1.5" fill="#78c6e0" stroke="#2d3436" stroke-width="0.8"/><circle cx="12.8" cy="1.8" r="1.5" fill="#78c6e0" stroke="#2d3436" stroke-width="0.8"/><circle cx="0.8" cy="6.5" r="1.5" fill="#78c6e0" stroke="#2d3436" stroke-width="0.8"/><circle cx="2.2" cy="12" r="1.5" fill="#78c6e0" stroke="#2d3436" stroke-width="0.8"/><circle cx="12.8" cy="11" r="1.5" fill="#78c6e0" stroke="#2d3436" stroke-width="0.8"/><circle cx="7.5" cy="6.5" r="2.5" fill="#78c6e0" stroke="#2d3436" stroke-width="0.8"/></g></svg>
<svg style="position:absolute;left:453px;top:102px" width="15" height="15" viewBox="0 0 15 15"><path d="M0.6 0.6H8.5L10.4 2.5V12.4H0.6Z" fill="#f8f5e6" stroke="#2d3436" stroke-width="1.1"/><path d="M8.3 0.6V2.7H10.4" fill="none" stroke="#2d3436" stroke-width="1"/><path d="M11 0L12.4 1.3V11.5" fill="none" stroke="#2d3436" stroke-width="1"/><circle cx="4.4" cy="5" r="0.55" fill="#2d3436"/><circle cx="5.5" cy="4" r="0.55" fill="#2d3436"/><circle cx="6.6" cy="5" r="0.55" fill="#2d3436"/><circle cx="5.5" cy="7.3" r="0.55" fill="#2d3436"/><circle cx="5.5" cy="9.3" r="0.6" fill="#2d3436"/></svg>
<svg style="position:absolute;left:455px;top:285px" width="11" height="15" viewBox="0 0 11 15"><path d="M5.5 14L1.5 8.5C0 6.5 0.6 0.7 5.5 0.7C10.4 0.7 11 6.5 9.5 8.5Z" fill="#fff" stroke="#2d3436" stroke-width="1.1"/><circle cx="5.5" cy="5" r="1.6" fill="#78c6e0" stroke="#2d3436" stroke-width="0.6"/></svg>
<svg style="position:absolute;left:180px;top:400px" width="15" height="15" viewBox="0 0 15 15"><g transform="scale(1.0)"><path d="M7.5 0.8L9.5 5.3L14.3 5.7L10.7 8.9L11.8 13.8L7.5 11.2L3.2 13.8L4.3 8.9L0.7 5.7L5.5 5.3Z" fill="#f5f9f5" stroke="#2d3436" stroke-width="1"/></g></svg>
<svg style="position:absolute;left:482px;top:287px" width="15" height="15" viewBox="0 0 15 15"><path d="M3.3 0.6L6 3.3L3.3 6L0.6 3.3Z" fill="#b8e0b8" stroke="#2d3436" stroke-width="0.9"/><rect x="8.6" y="0.7" width="5.4" height="5.4" fill="#fff" stroke="#2d3436" stroke-width="0.9"/><rect x="0.7" y="8.6" width="5.4" height="5.4" fill="#f8c850" stroke="#2d3436" stroke-width="0.9"/><path d="M11.3 8.8L14.2 14H8.4Z" fill="#78c6e0" stroke="#2d3436" stroke-width="0.9"/></svg>
<svg style="position:absolute;left:568px;top:290px" width="17" height="11" viewBox="0 0 17 11"><rect x="0.6" y="3.5" width="15.8" height="4" fill="#dcdcd8" stroke="#2d3436" stroke-width="1"/><rect x="3.6" y="0.6" width="6" height="9.8" fill="#f8b4c4" stroke="#d81e48" stroke-width="1.1"/></svg>
<svg style="position:absolute;left:489px;top:316px" width="13" height="13" viewBox="0 0 13 13"><path d="M5.5 0.5H7.5V5.5H12.5V7.5H7.5V12.5H5.5V7.5H0.5V5.5H5.5Z" fill="#c4e8cc" stroke="#2fa845" stroke-width="1.1"/></svg>
<svg style="position:absolute;left:511px;top:316px" width="17" height="11" viewBox="0 0 17 11"><rect x="0.6" y="3.5" width="15.8" height="4" fill="#dcdcd8" stroke="#2d3436" stroke-width="1"/><rect x="3.6" y="0.6" width="6" height="9.8" fill="#f8b4c4" stroke="#d81e48" stroke-width="1.1"/></svg>
<svg style="position:absolute;left:543px;top:315px" width="16" height="15" viewBox="0 0 16 15"><rect x="3.6" y="0.6" width="8.8" height="3.4" fill="#f6f1dc" stroke="#2d3436" stroke-width="1.1"/><rect x="0.6" y="3.8" width="14.8" height="7" rx="1" fill="#d3d7d3" stroke="#2d3436" stroke-width="1.1"/><rect x="3.6" y="7.2" width="8.8" height="7.2" fill="#f6f1dc" stroke="#2d3436" stroke-width="1.1"/><path d="M5.5 10.6H10.5M5.5 12.4H10.5" stroke="#2d3436" stroke-width="0.8"/></svg>
<svg style="position:absolute;left:563px;top:320px" width="7" height="4" viewBox="0 0 7 4"><path d="M0 0 H7 L3.5 4 Z" fill="#222"/></svg>
<svg style="position:absolute;left:643px;top:315px" width="18" height="16" viewBox="0 0 18 16"><path d="M12.4 7.5V0.6H0.6V12.4H5.5" fill="#fff" stroke="#2d3436" stroke-width="1.1"/><path d="M0.6 4.5H12.4M0.6 8.5H6M4.5 0.6V12.4" stroke="#2d3436" stroke-width="1"/><path d="M6.5 10.5H16M13.3 7.8L16 10.5L13.3 13.2" fill="none" stroke="#3a78c8" stroke-width="1.1"/></svg>
<svg style="position:absolute;left:838px;top:98px" width="14" height="15" viewBox="0 0 14 15"><rect x="0.6" y="1.6" width="12.8" height="12.8" fill="#f8f5e0" stroke="#2d3436" stroke-width="1.2"/><rect x="1.2" y="2.2" width="11.6" height="2.3" fill="#6ab8d8"/><path d="M3.5 0V3M10.5 0V3" stroke="#2d3436" stroke-width="1.1"/><rect x="2" y="6" width="10" height="7" fill="#2d3436"/><rect x="3" y="7" width="2" height="2" fill="#f8f5e0"/><rect x="3" y="10" width="2" height="2" fill="#f8f5e0"/><rect x="6" y="7" width="2" height="2" fill="#f8f5e0"/><rect x="6" y="10" width="2" height="2" fill="#f8f5e0"/><rect x="9" y="7" width="2" height="2" fill="#f8f5e0"/><rect x="9" y="10" width="2" height="2" fill="#f8f5e0"/></svg>
<svg style="position:absolute;left:964px;top:100px" width="14" height="12" viewBox="0 0 14 12"><path d="M0 0.5H14M0 5.5H14M0 10.5H14" stroke="#2d3436" stroke-width="1"/></svg>
<svg style="position:absolute;left:838px;top:121px" width="14" height="15" viewBox="0 0 14 15"><rect x="0.6" y="1.6" width="12.8" height="12.8" fill="#f8f5e0" stroke="#2d3436" stroke-width="1.2"/><rect x="1.2" y="2.2" width="11.6" height="2.3" fill="#6ab8d8"/><path d="M3.5 0V3M10.5 0V3" stroke="#2d3436" stroke-width="1.1"/><rect x="2" y="6" width="10" height="7" fill="#2d3436"/><rect x="3" y="7" width="2" height="2" fill="#f8f5e0"/><rect x="3" y="10" width="2" height="2" fill="#f8f5e0"/><rect x="6" y="7" width="2" height="2" fill="#f8f5e0"/><rect x="6" y="10" width="2" height="2" fill="#f8f5e0"/><rect x="9" y="7" width="2" height="2" fill="#f8f5e0"/><rect x="9" y="10" width="2" height="2" fill="#f8f5e0"/></svg>
<svg style="position:absolute;left:964px;top:123px" width="14" height="12" viewBox="0 0 14 12"><path d="M0 0.5H14M0 5.5H14M0 10.5H14" stroke="#2d3436" stroke-width="1"/></svg>
<svg style="position:absolute;left:765px;top:192px" width="15" height="15" viewBox="0 0 15 15"><g transform="scale(1.0)"><path d="M7.5 0.8L9.5 5.3L14.3 5.7L10.7 8.9L11.8 13.8L7.5 11.2L3.2 13.8L4.3 8.9L0.7 5.7L5.5 5.3Z" fill="#fcd27a" stroke="#2d3436" stroke-width="1"/></g></svg>
<svg style="position:absolute;left:1126px;top:191px" width="17" height="17" viewBox="0 0 17 17"><path d="M6.8 10.2L2.2 14.8" stroke="#2d3436" stroke-width="3.2" stroke-linecap="round"/><path d="M6.8 10.2L2.2 14.8" stroke="#e0e0dc" stroke-width="1.2" stroke-linecap="round"/><circle cx="10.5" cy="6.5" r="5.3" fill="#fff" stroke="#2d3436" stroke-width="1.2"/><path d="M7.5 6.5H13.5M10.5 3.5V9.5" stroke="#2d3436" stroke-width="1.2"/></svg>
<svg style="position:absolute;left:765px;top:398px" width="15" height="15" viewBox="0 0 15 15"><g transform="scale(1.0)"><path d="M7.5 0.8L9.5 5.3L14.3 5.7L10.7 8.9L11.8 13.8L7.5 11.2L3.2 13.8L4.3 8.9L0.7 5.7L5.5 5.3Z" fill="#fcd27a" stroke="#2d3436" stroke-width="1"/></g></svg>
<svg style="position:absolute;left:1126px;top:397px" width="17" height="17" viewBox="0 0 17 17"><path d="M6.8 10.2L2.2 14.8" stroke="#2d3436" stroke-width="3.2" stroke-linecap="round"/><path d="M6.8 10.2L2.2 14.8" stroke="#e0e0dc" stroke-width="1.2" stroke-linecap="round"/><circle cx="10.5" cy="6.5" r="5.3" fill="#fff" stroke="#2d3436" stroke-width="1.2"/><path d="M7.5 6.5H13.5M10.5 3.5V9.5" stroke="#2d3436" stroke-width="1.2"/></svg>
<svg style="position:absolute;left:172px;top:612px" width="18" height="15" viewBox="0 0 18 15"><path d="M8 1.3C8.3 0.8 8.9 0.6 9.6 0.6H11.4C12.5 0.6 13.4 1.3 13.4 2.6V7C13.4 7.8 14 8.4 14.8 8.4C15.8 8.4 16.4 9 16.4 10V12.4H13" fill="#fff" stroke="#2d3436" stroke-width="1.1"/><path d="M3.6 8.6V3.6C3.6 2.3 4.5 1.6 5.6 1.6H7.4C8.5 1.6 9.4 2.3 9.4 3.6V8.6C9.4 9.2 10 9.8 10.8 9.8C11.8 9.8 12.4 10.4 12.4 11.4V14.4H0.6V11.4C0.6 10.4 1.2 9.8 2.2 9.8C3 9.8 3.6 9.2 3.6 8.6Z" fill="#fff" stroke="#2d3436" stroke-width="1.1"/></svg>
<svg style="position:absolute;left:284px;top:615px" width="16" height="11" viewBox="0 0 16 11"><rect x="0.6" y="3.5" width="14.8" height="4" fill="#dcdcd8" stroke="#2d3436" stroke-width="1"/><rect x="3.6" y="0.6" width="6" height="9.8" fill="#f8b4c4" stroke="#d81e48" stroke-width="1.1"/></svg>
<svg style="position:absolute;left:177px;top:641px" width="14" height="14" viewBox="0 0 14 14"><path d="M5.5 0.5H7.5V5.5H13.5V7.5H7.5V13.5H5.5V7.5H0.5V5.5H5.5Z" fill="#c4e8cc" stroke="#2fa845" stroke-width="1.1"/></svg>
<svg style="position:absolute;left:197px;top:647px" width="7" height="4" viewBox="0 0 7 4"><path d="M0 0 H7 L3.5 4 Z" fill="#222"/></svg>
<svg style="position:absolute;left:212px;top:640px" width="15" height="16" viewBox="0 0 15 16"><path d="M1 15L2 11L11.5 1.5L14 4L4.5 13.5Z" fill="#78aee8" stroke="#2d3436" stroke-width="1"/><path d="M10 3L12.5 5.5" stroke="#2d3436" stroke-width="0.9"/></svg>
<svg style="position:absolute;left:235px;top:642px" width="16" height="11" viewBox="0 0 16 11"><rect x="0.6" y="3.5" width="14.8" height="4" fill="#dcdcd8" stroke="#2d3436" stroke-width="1"/><rect x="3.6" y="0.6" width="6" height="9.8" fill="#f8b4c4" stroke="#d81e48" stroke-width="1.1"/></svg>
<svg style="position:absolute;left:267px;top:640px" width="16" height="15" viewBox="0 0 16 15"><rect x="3.6" y="0.6" width="8.8" height="3.4" fill="#f6f1dc" stroke="#2d3436" stroke-width="1.1"/><rect x="0.6" y="3.8" width="14.8" height="7" rx="1" fill="#d3d7d3" stroke="#2d3436" stroke-width="1.1"/><rect x="3.6" y="7.2" width="8.8" height="7.2" fill="#f6f1dc" stroke="#2d3436" stroke-width="1.1"/><path d="M5.5 10.6H10.5M5.5 12.4H10.5" stroke="#2d3436" stroke-width="0.8"/></svg>
<svg style="position:absolute;left:287px;top:647px" width="7" height="4" viewBox="0 0 7 4"><path d="M0 0 H7 L3.5 4 Z" fill="#222"/></svg>
<svg style="position:absolute;left:303px;top:641px" width="16" height="13" viewBox="0 0 16 13"><rect x="0.6" y="0.6" width="14.8" height="11.8" fill="#fff" stroke="#2d3436" stroke-width="1.1"/><path d="M0.6 4.5H15.4M0.6 8.5H15.4M4.5 0.6V12.4" stroke="#2d3436" stroke-width="1"/></svg>
<svg style="position:absolute;left:319px;top:646px" width="8" height="4" viewBox="0 0 8 4"><path d="M0 0 H8 L4.0 4 Z" fill="#222"/></svg>
<svg style="position:absolute;left:401px;top:641px" width="18" height="16" viewBox="0 0 18 16"><path d="M12.4 7.5V0.6H0.6V12.4H5.5" fill="#fff" stroke="#2d3436" stroke-width="1.1"/><path d="M0.6 4.5H12.4M0.6 8.5H6M4.5 0.6V12.4" stroke="#2d3436" stroke-width="1"/><path d="M6.5 10.5H16M13.3 7.8L16 10.5L13.3 13.2" fill="none" stroke="#3a78c8" stroke-width="1.1"/></svg>
<svg style="position:absolute;left:431px;top:640px" width="18" height="16" viewBox="0 0 18 16"><rect x="0.5" y="1.5" width="5" height="2" fill="#f8c850" stroke="#2d3436" stroke-width="1"/><rect x="0.5" y="5.5" width="5" height="2" fill="#78b8e0" stroke="#2d3436" stroke-width="1"/><rect x="0.5" y="9.5" width="5" height="2" fill="#f8c850" stroke="#2d3436" stroke-width="1"/><rect x="0.5" y="13.5" width="5" height="2" fill="#78b8e0" stroke="#2d3436" stroke-width="1"/><rect x="11.5" y="5.5" width="5" height="2" fill="#78b8e0" stroke="#2d3436" stroke-width="1"/><rect x="11.5" y="9.5" width="5" height="2" fill="#f8c850" stroke="#2d3436" stroke-width="1"/><path d="M7 5.8L9.2 7.9L7 10Z" fill="#2d3436"/></svg>
<svg style="position:absolute;left:1132px;top:216px" width="8" height="7" viewBox="0 0 8 7"><path d="M0.8 6L3.75 2.2L6.7 6" fill="none" stroke="#a6a6a6" stroke-width="2"/></svg>
<svg style="position:absolute;left:1132px;top:423px" width="8" height="7" viewBox="0 0 8 7"><path d="M0.8 6L3.75 2.2L6.7 6" fill="none" stroke="#a6a6a6" stroke-width="2"/></svg>
<svg style="position:absolute;left:740px;top:366px" width="8" height="7" viewBox="0 0 8 7"><path d="M0.8 6L3.75 2.2L6.7 6" fill="none" stroke="#a6a6a6" stroke-width="2"/></svg>
<svg style="position:absolute;left:1142px;top:692px" width="8" height="7" viewBox="0 0 8 7"><path d="M0.8 6L3.75 2.2L6.7 6" fill="none" stroke="#a6a6a6" stroke-width="2"/></svg>
<svg style="position:absolute;left:1132px;top:379px" width="8" height="7" viewBox="0 0 8 7"><path d="M0.8 1L3.75 4.8L6.7 1" fill="none" stroke="#a6a6a6" stroke-width="2"/></svg>
<svg style="position:absolute;left:1132px;top:585px" width="8" height="7" viewBox="0 0 8 7"><path d="M0.8 1L3.75 4.8L6.7 1" fill="none" stroke="#a6a6a6" stroke-width="2"/></svg>
<svg style="position:absolute;left:1142px;top:801px" width="8" height="7" viewBox="0 0 8 7"><path d="M0.8 1L3.75 4.8L6.7 1" fill="none" stroke="#a6a6a6" stroke-width="2"/></svg>
<svg style="position:absolute;left:740px;top:585px" width="8" height="7" viewBox="0 0 8 7"><path d="M0.8 1L3.75 4.8L6.7 1" fill="none" stroke="#a6a6a6" stroke-width="2"/></svg>
<svg style="position:absolute;left:174px;top:817px" width="7" height="8" viewBox="0 0 7 8"><path d="M5.5 0.8L1.5 4L5.5 7.2" fill="none" stroke="#404040" stroke-width="1.8"/></svg>
<svg style="position:absolute;left:1127px;top:817px" width="7" height="8" viewBox="0 0 7 8"><path d="M1.5 0.8L5.5 4L1.5 7.2" fill="none" stroke="#404040" stroke-width="1.8"/></svg>
<div style="left:10px;top:70px;width:243px;height:121px;background:rgba(40,60,70,0.45);filter:blur(1.5px);"></div>
<div style="left:5px;top:65px;width:245px;height:123px;background:#f2f2f2;border:1px solid #d0d0d0;box-sizing:border-box;"></div>
<div class="t" style="left:40px;top:73px;font-size:12px;letter-spacing:-0.25px;">Speichern</div>
<div class="t" style="left:40px;top:95px;font-size:12px;letter-spacing:-0.15px;">Speichern und schließen</div>
<div class="t" style="left:40px;top:117px;font-size:12px;letter-spacing:-0.2px;">Speichern und als Favorit</div>
<div class="t" style="left:40px;top:139px;font-size:12px;letter-spacing:-0.12px;">Speichern und kopieren</div>
<div class="t" style="left:40px;top:168px;font-size:12px;letter-spacing:0px;">Benachrichtigung bei Änderung</div>
<div style="left:36px;top:159px;width:211px;height:1px;background:#d7d7d7;"></div>
<div style="left:8px;top:92px;width:168px;height:20px;border:3px solid #ff7f00;box-sizing:border-box;"></div>
<svg style="position:absolute;left:13px;top:71px" width="14" height="16" viewBox="0 0 14 16"><path d="M4 3.5H0.5V14.5H12.5V3.5H9" fill="#f3f9f3" stroke="#2d3436" stroke-width="1"/><path d="M6.5 0V10" stroke="#12a826" stroke-width="1.2"/><path d="M3.8 7.2L6.5 10.2L9.2 7.2" fill="none" stroke="#12a826" stroke-width="1.2"/></svg>
<svg style="position:absolute;left:12px;top:94px" width="14" height="14" viewBox="0 0 14 14"><path d="M0.8 2.2L2.2 0.8L7 5.6L11.8 0.8L13.2 2.2L8.4 7L13.2 11.8L11.8 13.2L7 8.4L2.2 13.2L0.8 11.8L5.6 7Z" fill="#f6a8bc" stroke="#d8123c" stroke-width="1.2"/></svg>
<svg style="position:absolute;left:12px;top:116px" width="17" height="16" viewBox="0 0 17 16"><path d="M0.6 0.6H9.2L11 2.4V12.4H0.6Z" fill="#a6d2e2" stroke="#2d3436" stroke-width="1"/><path d="M10 4.8L11.5 8.2L15.2 8.5L12.4 10.8L13.3 14.5L10 12.6L6.7 14.5L7.6 10.8L4.8 8.5L8.5 8.2Z" fill="#fcc844" stroke="#2d3436" stroke-width="1"/></svg>
<svg style="position:absolute;left:12px;top:138px" width="15" height="15" viewBox="0 0 15 15"><path d="M3.5 0.6H11L13.9 3.5V10.9H3.5Z" fill="#fde3b0" stroke="#2d3436" stroke-width="1"/><path d="M0.6 3.5H8.2L10.9 6.2V13.9H0.6Z" fill="#fde3b0" stroke="#2d3436" stroke-width="1"/></svg>
<svg style="position:absolute;left:12px;top:166px" width="15" height="16" viewBox="0 0 15 16"><path d="M7.5 0.8C4.5 0.8 3.3 3 3.3 6V10L0.8 12.5H14.2L11.7 10V6C11.7 3 10.5 0.8 7.5 0.8Z" fill="#fdd68a" stroke="#2d3436" stroke-width="1.1"/><path d="M5.8 13.2A1.7 1.7 0 0 0 9.2 13.2" fill="#fdd68a" stroke="#2d3436" stroke-width="1"/></svg>
<svg style="position:absolute;left:233px;top:118px" width="6" height="10" viewBox="0 0 6 10"><path d="M1 1L5 5L1 9" fill="none" stroke="#444" stroke-width="1.3"/></svg>
<div style="left:1px;top:36px;width:50px;height:31px;border:3px solid #ff7f00;box-sizing:border-box;"></div>
</body></html>
